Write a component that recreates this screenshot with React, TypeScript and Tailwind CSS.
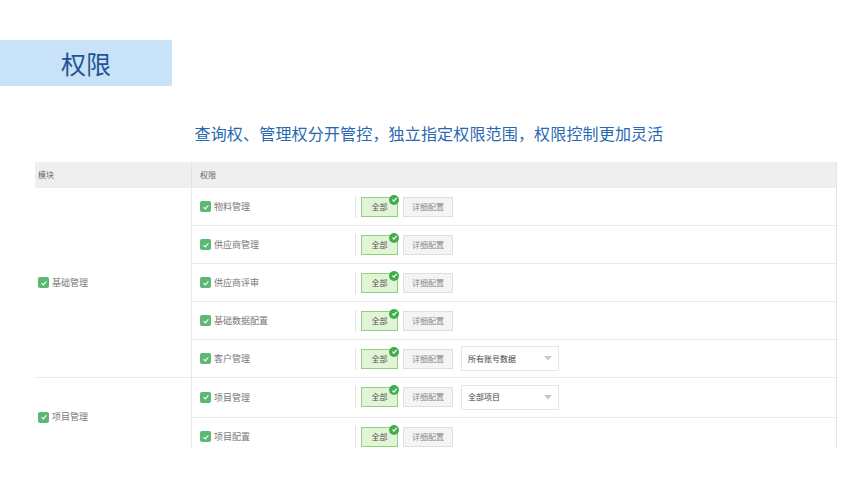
import React from 'react'

const font = { fontFamily: '"Noto Sans CJK SC", "Noto Sans", sans-serif' }

type Perm = { name: string; select?: string }

const groups: { name: string; rows: Perm[]; rowH: string }[] = [
    {
        name: '基础管理',
        rowH: 'h-[38px]',
        rows: [
            { name: '物料管理' },
            { name: '供应商管理' },
            { name: '供应商评审' },
            { name: '基础数据配置' },
            { name: '客户管理', select: '所有账号数据' },
        ],
    },
    {
        name: '项目管理',
        rowH: 'h-[39.5px]',
        rows: [
            { name: '项目管理', select: '全部项目' },
            { name: '项目配置' },
        ],
    },
]

const Check: React.FC = () => (
    <span className="flex items-center justify-center w-[11px] h-[11px] rounded-[2px] bg-[#5cb873] shrink-0">
        <svg width="8" height="8" viewBox="0 0 10 10">
            <path d="M2 5.2 L4.2 7.3 L8 2.8" fill="none" stroke="white" strokeWidth="1.4" />
        </svg>
    </span>
)

const PermRow: React.FC<{ perm: Perm; rowH: string }> = ({ perm, rowH }) => (
    <div className={`flex items-center ${rowH} border-b border-[#e9e9e9]`}>
        <div className="flex items-center gap-[3px] w-[163px] pl-[8px]">
            <Check />
            <span className="text-[9px] text-[#777]">{perm.name}</span>
        </div>
        <div className="w-px h-[22px] bg-[#e3e3e3]" />
        <div className="relative ml-[5px] flex items-center justify-center w-[37px] h-[20px] bg-[#e2f4d6] border border-[#8fd17d] text-[8px] text-[#555]">
            全部
            <span className="absolute -top-[3px] right-[-2px] flex items-center justify-center w-[10px] h-[10px] rounded-full bg-[#3fae4c]">
                <svg width="7" height="7" viewBox="0 0 10 10">
                    <path d="M2 5.2 L4.2 7.3 L8 2.8" fill="none" stroke="white" strokeWidth="1.8" />
                </svg>
            </span>
        </div>
        <div className="ml-[5px] flex items-center justify-center w-[50px] h-[20px] bg-[#f4f4f4] border border-[#dedede] text-[8px] text-[#888]">
            详细配置
        </div>
        {perm.select && (
            <div className="ml-[8px] flex items-center justify-between w-[98px] h-[25px] bg-white border border-[#e6e6e6] px-[6px] text-[8px] text-[#444]">
                <span>{perm.select}</span>
                <svg width="8" height="5" viewBox="0 0 8 5">
                    <path d="M0 0 L8 0 L4 4.5 Z" fill="#c8c8c8" />
                </svg>
            </div>
        )}
    </div>
)

const App: React.FC = () => {
    return (
        <div className="w-[860px] h-[484px] bg-white overflow-hidden" style={font}>
            <div className="pt-[40px]">
                <div className="flex items-center justify-center w-[172px] h-[46px] bg-[#c8e2f8] text-[25px] text-[#1f5595] leading-none">
                    权限
                </div>
            </div>
            <div className="mt-[35px] text-center text-[16px] tracking-[0.17px] text-[#2868b0] leading-[24px] pr-[2px]">
                查询权、管理权分开管控，独立指定权限范围，权限控制更加灵活
            </div>
            <div className="ml-[35px] mt-[17px] w-[802px] h-[286px] overflow-hidden border-r border-[#e6e6e6]">
                <div className="flex h-[26px] bg-[#efefef] text-[8px] text-[#666]">
                    <div className="flex items-center w-[157px] pl-[3px] border-r border-[#e3e3e3]">模块</div>
                    <div className="flex items-center pl-[8px]">权限</div>
                </div>
                {groups.map((g) => (
                    <div key={g.name} className="flex border-b border-[#e9e9e9]">
                        <div className="flex items-center gap-[3px] w-[157px] pl-[3px] border-r border-[#e9e9e9]">
                            <Check />
                            <span className="text-[9px] text-[#777]">{g.name}</span>
                        </div>
                        <div className="flex-1 flex flex-col">
                            {g.rows.map((r, i) => (
                                <div key={r.name} className={i === g.rows.length - 1 ? '-mb-px' : ''}>
                                    <PermRow perm={r} rowH={g.rowH} />
                                </div>
                            ))}
                        </div>
                    </div>
                ))}
            </div>
        </div>
    )
}

export default App
